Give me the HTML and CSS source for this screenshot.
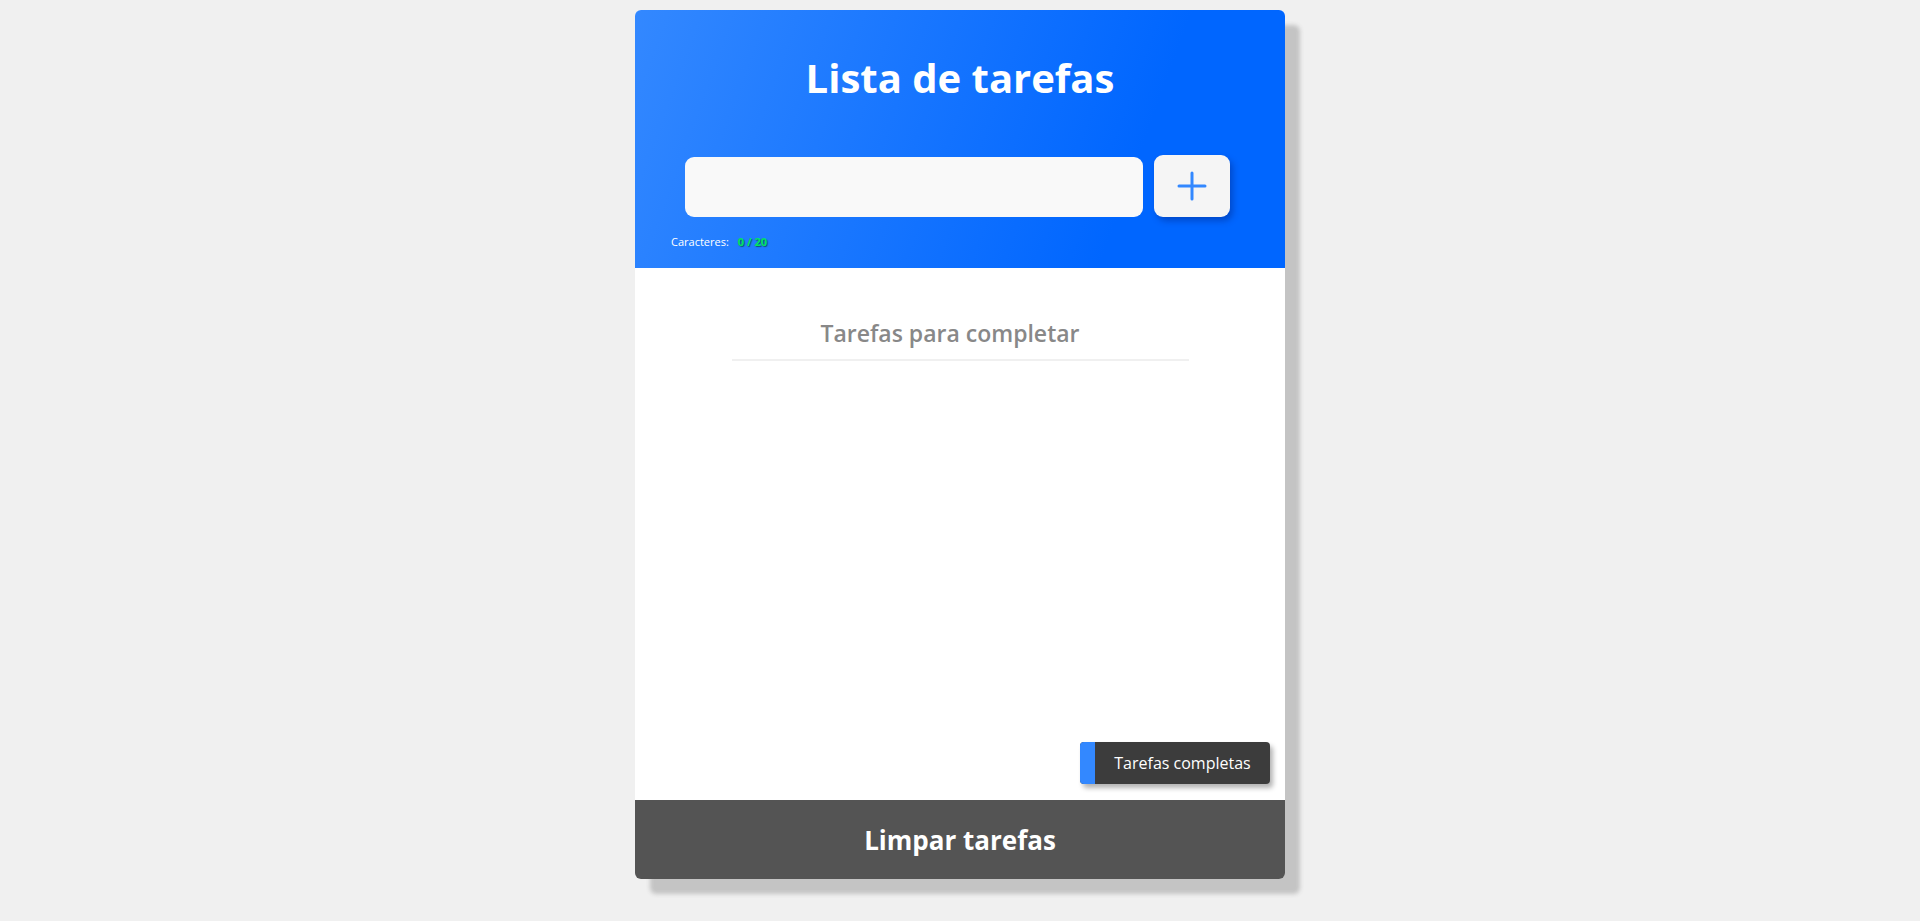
FILE: index.html
```html
<!DOCTYPE html>
<html lang="pt">
<head>
<meta charset="utf-8">
<title>Lista de tarefas</title>
<link rel="stylesheet" href="styles.css">
</head>
<body>
<div class="card">
  <header class="head">
    <h1 class="title">Lista de tarefas</h1>
    <div class="entry">
      <input class="task-input" type="text" maxlength="20">
      <button class="add-btn" aria-label="Adicionar">
        <svg width="30" height="30" viewBox="0 0 30 30"><path d="M15 2V28M2 15H28" stroke="#3388ff" stroke-width="3" stroke-linecap="round" fill="none"/></svg>
      </button>
    </div>
    <div class="counter"><span class="counter-label">Caracteres:</span><span class="counter-value">0 / 20</span></div>
  </header>
  <main class="body">
    <h2 class="section-title">Tarefas para completar</h2>
    <ul class="tasks"></ul>
    <button class="done-btn"><span class="done-strip"></span><span class="done-text">Tarefas completas</span></button>
  </main>
  <footer class="foot">
    <button class="clear-btn">Limpar tarefas</button>
  </footer>
</div>
</body>
</html>
```
FILE: styles.css
```css
* { box-sizing: border-box; }
html, body { margin: 0; padding: 0; }
body {
  background: #f0f0f0;
  font-family: "Open Sans", "Liberation Sans", sans-serif;
  height: 921px;
  display: flex;
  justify-content: center;
  padding-top: 10px;
}
.card {
  width: 650px;
  height: 869px;
  border-radius: 6px;
  overflow: hidden;
  background: #fff;
  box-shadow: 15px 15px 4px #c4c4c4;
  display: flex;
  flex-direction: column;
}
.head {
  height: 258px;
  background: linear-gradient(110deg, #3388ff 0%, #0066ff 75%);
  display: flex;
  flex-direction: column;
  align-items: stretch;
}
.title {
  margin: 0;
  padding-top: 48px;
  text-align: center;
  color: #fff;
  font-size: 40px;
  font-weight: 700;
  line-height: 40px;
}
.entry {
  display: flex;
  align-items: flex-end;
  gap: 11px;
  margin: 57px 0 0 50px;
}
.task-input {
  width: 458px;
  height: 60px;
  border: none;
  border-radius: 9px;
  background: #f9f9f9;
  outline: none;
}
.add-btn {
  width: 76px;
  height: 62px;
  border: none;
  border-radius: 9px;
  background: #f5f5f5;
  box-shadow: 3px 4px 6px rgba(0, 40, 140, 0.45);
  display: flex;
  align-items: center;
  justify-content: center;
  padding: 0;
}
.counter {
  margin: 17px 0 0 36px;
  font-size: 11px;
  color: #fff;
  display: flex;
  gap: 9px;
}
.counter-value {
  color: #00e660;
  font-weight: 700;
  text-shadow: 1px 1px 1px rgba(0, 60, 20, 0.6);
}
.body {
  flex: 1;
  display: flex;
  flex-direction: column;
  align-items: center;
  padding: 0 15px 16px;
}
.section-title {
  margin: 50px 0 0;
  width: 457px;
  text-align: center;
  color: #888;
  font-size: 23px;
  font-weight: 600;
  line-height: 30px;
  padding: 0 20px 11px 0;
  border-bottom: 2px solid #f0f0f0;
}
.tasks { flex: 1; margin: 0; padding: 0; list-style: none; }
.done-btn {
  align-self: flex-end;
  height: 42px;
  width: 190px;
  border: none;
  padding: 0;
  border-radius: 4px;
  overflow: hidden;
  background: #3c3c3c;
  display: flex;
  box-shadow: 3px 4px 5px rgba(0, 0, 0, 0.3);
  font-family: inherit;
}
.done-strip { width: 15px; background: #3388ff; }
.done-text {
  flex: 1;
  display: flex;
  align-items: center;
  justify-content: center;
  color: #fff;
  font-size: 16px;
  font-weight: 500;
}
.foot {
  height: 79px;
  background: #545454;
  display: flex;
}
.clear-btn {
  flex: 1;
  border: none;
  background: transparent;
  color: #fff;
  font-family: inherit;
  font-size: 26px;
  font-weight: 700;
}
```
